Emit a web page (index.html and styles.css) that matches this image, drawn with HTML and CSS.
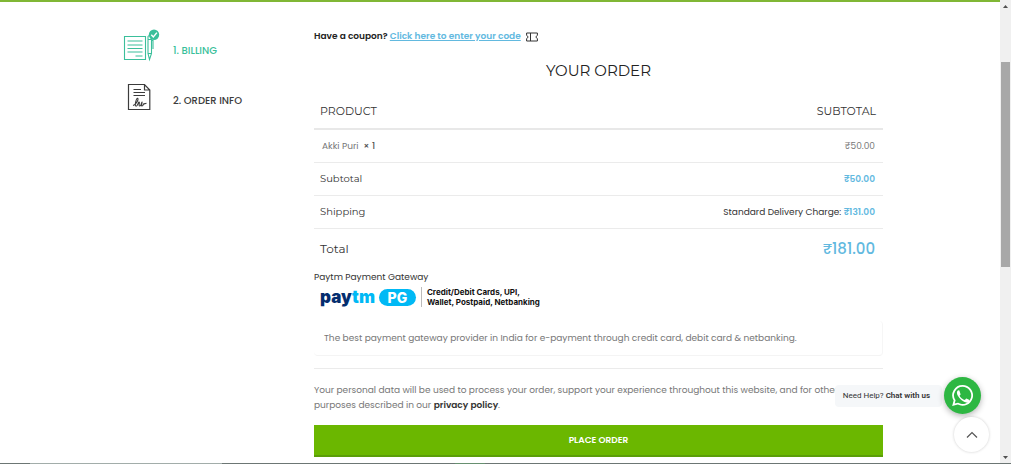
FILE: index.html
```html
<!DOCTYPE html>
<html lang="en">
<head>
<meta charset="utf-8">
<title>Checkout</title>
<link rel="stylesheet" href="styles.css">
</head>
<body>
<div class="window">
  <div class="page">
    <div class="container">
      <nav class="steps" aria-label="Checkout steps">
        <a class="step step-active" href="#billing">
          <svg class="step-icon" width="37" height="34" viewBox="0 0 37 34" fill="none" stroke="currentColor" aria-hidden="true">
            <path d="M22.500 13v18.500H1.500V8.500h21V18" stroke-width="1.100"/>
            <path d="M4.500 13h15M4.500 17h15M4.500 20.500h15M4.500 24h15M12.500 28h7" stroke-width="1.100"/>
            <path d="M25 8.500q1.500-2 3.500 0v17l-2 6-1.500-6v-17zM24.500 11.500h4M24.500 25.500h4M28.500 12.500H30V21" stroke-width="1.100"/>
            <circle cx="31" cy="6.800" r="5.200" fill="currentColor" stroke="none"/>
            <path d="M28.300 6.800l2 2.200 3.600-4.400" stroke="#fff" stroke-width="1.400"/>
          </svg>
          <span>1. BILLING</span>
        </a>
        <a class="step" href="#order">
          <svg class="step-icon" width="37" height="34" viewBox="0 -2 37 34" fill="none" stroke="currentColor" stroke-width="1.200" aria-hidden="true">
            <path d="M21.500 4.500H5.500v25h21.300V10zM21.500 4.500V10h5.300"/>
            <path d="M10.500 9.500h7.500M10.500 12.500h11.500M10.500 15.500h11.500" stroke-width="1.100"/>
            <path d="M10 25.500c3.500-1 6-6.800 4.700-7.300-1.500-.3-3.400 7.800-1.700 8 1.400.2 2.200-3.700 3-4.200 1.200 0-.9 4 .8 4 1.600 0 1.600-4 2.200-4 .5 1-1.400 3.800 0 4s1.500-3.300 2.500-2.200l2-.5" stroke-width="1.100"/>
          </svg>
          <span>2. ORDER INFO</span>
        </a>
      </nav>

      <main class="checkout">
        <p class="coupon">Have a coupon? <a href="#coupon">Click here to enter your code</a>
          <svg class="ticket" width="12" height="10" viewBox="0 0 12 10" fill="none" stroke="#333" aria-hidden="true">
            <path d="M.6 1h10.800v2.200L9.800 5l1.600 1.800V9H.6V6.800L2.200 5 .6 3.200zM4.500 1v8"/>
          </svg>
        </p>
        <h1 class="title">YOUR ORDER</h1>
        <table class="order">
          <thead>
            <tr><th scope="col">PRODUCT</th><th scope="col">SUBTOTAL</th></tr>
          </thead>
          <tbody>
            <tr class="item"><td>Akki Puri &nbsp;<b>× 1</b></td><td>₹50.00</td></tr>
            <tr><th scope="row">Subtotal</th><td><b class="price">₹50.00</b></td></tr>
            <tr><th scope="row">Shipping</th><td>Standard Delivery Charge: <b class="price">₹131.00</b></td></tr>
            <tr class="total"><th scope="row">Total</th><td><b class="price">₹181.00</b></td></tr>
          </tbody>
        </table>

        <section class="payment">
          <h2 class="gateway">Paytm Payment Gateway</h2>
          <div class="brand">
            <span class="paytm">pay<span class="paytm-tm">tm</span></span>
            <span class="pg">PG</span>
            <span class="methods">Credit/Debit Cards, UPI,<br>Wallet, Postpaid, Netbanking</span>
          </div>
          <p class="description">The best payment gateway provider in India for e-payment through credit card, debit card &amp; netbanking.</p>
        </section>

        <p class="privacy">Your personal data will be used to process your order, support your experience throughout this website, and for other purposes described in our <a href="#privacy">privacy policy</a>.</p>
        <button class="place-order" type="button">PLACE ORDER</button>
      </main>
    </div>

    <div class="floating">
      <div class="chat">
        <span class="chat-label">Need Help? <b>Chat with us</b></span>
        <button class="whatsapp" type="button" aria-label="Chat on WhatsApp">
          <svg width="21" height="21" viewBox="0 0 24 24" fill="#fff" aria-hidden="true">
            <path fill-rule="evenodd" d="M12.100 0A11.800 11.800 0 0 0 1.900 17.800L.2 24l6.400-1.700A11.850 11.850 0 1 0 12.100 0zm0 2a9.850 9.850 0 1 1-5.200 18.200l-3.800 1 1-3.700A9.850 9.850 0 0 1 12.100 2z"/>
            <path d="M8.400 6.400c-.2-.5-.4-.5-.7-.5-.9 0-2.100.9-2.100 2.900s1.500 4 1.700 4.300c.2.200 2.900 4.600 7.100 6.200 3.500 1.400 4.200 1 5 .1.600-.5.800-1.600.7-2.100-.2-.3-3.400-1.900-3.800-1.900-.5 0-1.200 1.700-1.700 1.800-.6.100-4.600-1.900-5.900-4.800 0-.5 1.100-1.300 1.100-1.900z"/>
          </svg>
        </button>
      </div>
      <button class="to-top" type="button" aria-label="Back to top">
        <svg width="12" height="8" viewBox="0 0 12 8" fill="none" stroke="#555" stroke-width="1.200" aria-hidden="true"><path d="M1 6.500l5-5 5 5"/></svg>
      </button>
    </div>
  </div>
  <div class="scrollbar" aria-hidden="true">
    <svg class="arrow" width="5" height="3" viewBox="0 0 5 3"><path d="M0 3L2.500 0 5 3z" fill="#505050"/></svg>
    <div class="track"><div class="thumb"></div></div>
    <svg class="arrow" width="5" height="3" viewBox="0 0 5 3"><path d="M0 0h5L2.500 3z" fill="#505050"/></svg>
  </div>
</div>
<div class="taskbar"></div>
</body>
</html>
```

FILE: styles.css
```css
* { box-sizing: border-box; }

body {
  margin: 0;
  height: 100vh;
  display: flex;
  flex-direction: column;
  overflow: hidden;
  background: #fff;
  color: #333;
  font: 9px/15px Poppins, Inter, "Noto Sans", sans-serif;
}

h1, h2, p { margin: 0; font-weight: 400; }
button { font: inherit; padding: 0; border: 0; cursor: pointer; }

.window { flex: 1; min-height: 0; display: flex; }
.page {
  flex: 1;
  min-width: 0;
  border-top: 2px solid #80b735;
  overflow: hidden;
}
.container {
  width: 76.6%;
  max-width: 1140px;
  margin: 0 auto;
  display: grid;
  grid-template-columns: 197fr 569fr;
}

.steps {
  display: flex;
  flex-direction: column;
  gap: 16px;
  padding: 26px 0 0 6px;
}
.step {
  display: flex;
  align-items: center;
  gap: 13px;
  color: #3c3c3c;
  font-size: 10px;
  font-weight: 500;
  text-decoration: none;
}
.step span { padding-top: 10px; }
.step-active { color: #3bbf9b; }

.checkout { padding-top: 27px; }
.coupon { color: #222; font-weight: 600; }
.coupon a { color: #62b9df; }
.ticket { margin-left: 3px; vertical-align: middle; }
.title {
  margin-top: 17px;
  color: #222;
  font: 400 15px/20px Montserrat, Inter, sans-serif;
  text-align: center;
}

.order { width: 100%; margin-top: 12px; border-collapse: collapse; }
.order th, .order td {
  height: 33px;
  padding: 0 8px 0 6px;
  font-weight: 400;
  text-align: left;
  border-bottom: 1px solid #ebebeb;
}
.order tbody td { padding-top: 2px; }
.order tbody th { font: 400 10px/15px Montserrat, Inter, sans-serif; }
.order th:last-child, .order td:last-child { text-align: right; }
.order thead th {
  height: 36px;
  padding-right: 7px;
  border-bottom: 2px solid #e8e8e8;
  font: 400 11px/16px Montserrat, Inter, sans-serif;
}
.order .item td { color: #777; }
.order .item td:first-child { padding-left: 8px; }
.item b { font-weight: 500; color: #555; }
.price { color: #62b9df; font-weight: 600; }
.order .total th, .order .total td { height: 40px; border: 0; font-size: 12px; }
.order .total .price { font-size: 15px; font-weight: 500; }

.gateway { margin-top: 1px; font-size: 9px; line-height: 16px; }
.brand { display: flex; align-items: center; height: 24px; padding-left: 6px; }
.paytm {
  color: #042e6f;
  font: 900 17px/20px Inter, sans-serif;
}
.paytm-tm { color: #00b9f5; }
.pg {
  width: 37px;
  margin: 0 5px 0 4px;
  border-radius: 9px;
  background: #00b9f5;
  color: #fff;
  font: 800 14px/17px Inter, sans-serif;
  text-align: center;
}
.methods {
  padding-left: 5px;
  border-left: 1px solid #bbb;
  color: #111;
  font: 700 8px/10px Inter, sans-serif;
}
.description {
  margin-top: 12px;
  padding: 10px 10px 9px;
  border-bottom: 1px solid #f4f4f4;
  border-right: 1px solid #f6f6f6;
  border-radius: 4px;
  color: #777;
}
.privacy {
  margin-top: 12px;
  padding: 14px 16px 0 0;
  border-top: 1px solid #ebebeb;
  color: #777;
}
.privacy a { color: #333; font-weight: 600; text-decoration: none; }
.place-order {
  width: 100%;
  height: 32px;
  margin-top: 12px;
  border-bottom: 2px solid #5b9e08;
  background: #6bb700;
  color: #fff;
  font-weight: 600;
}

.floating {
  position: fixed;
  right: 22px;
  bottom: 12px;
  display: flex;
  flex-direction: column;
  align-items: flex-end;
  gap: 3px;
}
.chat { display: flex; align-items: center; gap: 2px; margin-right: 8px; }
.chat-label {
  padding: 3px 12px 4px 8px;
  border-radius: 4px;
  background: #f5f7f9;
  font: 8px/15px Roboto, sans-serif;
}
.chat-label b { font-weight: 600; }
.whatsapp, .to-top { display: grid; place-items: center; border-radius: 50%; }
.whatsapp {
  width: 37px;
  height: 37px;
  background: #2db742;
  box-shadow: 0 2px 6px rgba(0, 0, 0, .3);
}
.to-top {
  width: 35px;
  height: 35px;
  background: #fff;
  box-shadow: 0 0 3px rgba(0, 0, 0, .2);
}

.scrollbar {
  width: 11px;
  padding: 5px 1px 4px;
  display: flex;
  flex-direction: column;
  align-items: center;
  background: #f0f0f0;
}
.track { flex: 1; width: 100%; padding-top: 54px; }
.thumb { height: 52%; background: #a8a8a8; }

.taskbar {
  height: 1px;
  background: linear-gradient(90deg, #6c7674 3%, #a2adaa 3% 22%, #6c7674 22% 45%, #679070 45% 48%, #6c7674 48%);
}
```
